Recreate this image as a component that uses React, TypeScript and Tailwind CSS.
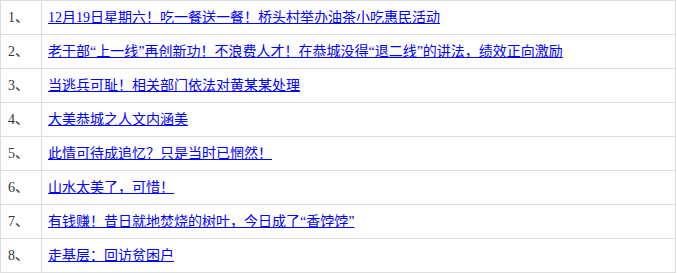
const items = [
  '12月19日星期六！吃一餐送一餐！桥头村举办油茶小吃惠民活动',
  '老干部“上一线”再创新功！不浪费人才！在恭城没得“退二线”的讲法，绩效正向激励',
  '当逃兵可耻！相关部门依法对黄某某处理',
  '大美恭城之人文内涵美',
  '此情可待成追忆？只是当时已惘然！',
  '山水太美了，可惜！',
  '有钱赚！昔日就地焚烧的树叶，今日成了“香饽饽”',
  '走基层：回访贫困户',
];

export default function App() {
  return (
    <div className="w-[676px] border-l border-t border-[#dddddd] bg-white font-['Liberation_Serif','Noto_Sans_CJK_SC',serif] text-[14px]">
      {items.map((title, i) => (
        <div key={i} className="flex h-[34px] border-b border-[#dddddd]">
          <div className="flex w-[41px] shrink-0 items-center border-r border-[#dddddd] pl-[7px] text-[#333333]">
            {i + 1}、
          </div>
          <div className="flex flex-1 items-center border-r border-[#dddddd] pl-[6px]">
            <a href="#" className="text-[#0000ff] underline underline-offset-[1px]">
              {title}
            </a>
          </div>
        </div>
      ))}
    </div>
  );
}
